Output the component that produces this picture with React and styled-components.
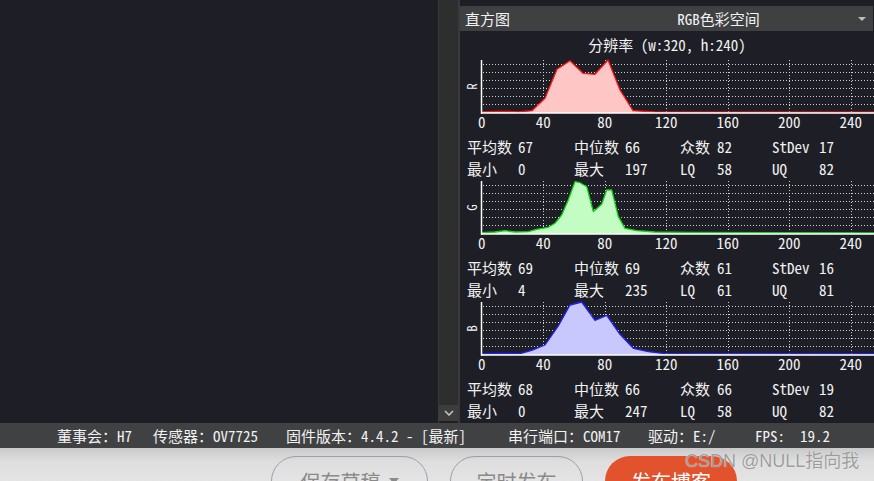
import React from 'react';
import styled, { createGlobalStyle } from 'styled-components';

const GlobalStyle = createGlobalStyle`
  html, body {
    margin: 0;
    padding: 0;
    background: #1e1f26;
  }
  body {
    font-family: "Noto Sans Mono CJK SC", "Liberation Mono", "Noto Sans CJK SC", monospace;
  }
`;

const MONO = '"Noto Sans Mono CJK SC", "Liberation Mono", "Noto Sans CJK SC", monospace';

const Screen = styled.div`
  width: 874px;
  height: 481px;
  overflow: hidden;
  display: flex;
  flex-direction: column;
`;

const Workspace = styled.div`
  flex: none;
  display: flex;
  height: 423px;
  background: #1e1f26;
`;

const Viewer = styled.div`
  width: 438px;
  background: #1e1f26;
`;

const ScrollTrack = styled.div`
  width: 19px;
  background: #2e2e2e;
  border-left: 1px solid #3a3a3a;
  border-right: 2px solid #393a3d;
  display: flex;
  flex-direction: column;
  justify-content: flex-end;
  box-shadow: inset 0 -2px 0 #202024;
  padding-bottom: 2px;
`;

const ScrollButton = styled.div`
  height: 16px;
  background: #3d3d3d;
  display: flex;
  align-items: center;
  justify-content: center;
`;

const Panel = styled.div`
  flex: 1;
  display: flex;
  flex-direction: column;
  padding-top: 6px;
  background: #1e1f26;
  color: #f2f2f2;
`;

const PanelHeader = styled.div`
  flex: none;
  height: 25px;
  background: #3f4042;
  display: flex;
  align-items: center;
  font-size: 15px;
  margin-right: 1px;
`;

const HeaderTitle = styled.div`
  width: 100px;
  padding-left: 5px;
`;

const Combo = styled.div`
  flex: 1;
  display: flex;
  align-items: center;
`;

const ComboText = styled.div`
  flex: 1;
  text-align: center;
  padding-left: 22px;
`;

const ComboArrow = styled.div`
  width: 0;
  height: 0;
  border-left: 4px solid transparent;
  border-right: 4px solid transparent;
  border-top: 4px solid #bdbdbd;
  margin-right: 7px;
  margin-left: 8px;
`;

const Resolution = styled.div`
  flex: none;
  height: 27px;
  display: flex;
  align-items: center;
  justify-content: center;
  font-size: 15px;
  white-space: pre;
`;

const Section = styled.div`
  flex: none;
  display: flex;
  flex-direction: column;
`;

const Chart = styled.svg`
  display: block;
  width: 414px;
  height: 74px;
`;

const StatsGrid = styled.div`
  display: grid;
  grid-template-columns: 51px 56px 51px 55px 37px 55px 47px 1fr;
  grid-auto-rows: 22px;
  align-items: center;
  padding-left: 7px;
  margin-top: 3px;
  font-size: 15px;
  white-space: pre;
`;

const StatusBar = styled.div`
  flex: none;
  height: 25px;
  background: #404143;
  display: flex;
  align-items: center;
  padding-left: 57px;
  color: #f2f2f2;
  font-size: 15px;
  white-space: pre;
`;

const StatusItem = styled.div`
  width: ${(p) => (p.$width ? `${p.$width}px` : 'auto')};
  flex: none;
`;

const Footer = styled.div`
  flex: 1;
  min-height: 0;
  overflow: hidden;
  position: relative;
  background: linear-gradient(#c9c9c9, #dedede 40%, #e4e4e4);
  display: flex;
  align-items: flex-start;
  gap: 22px;
  padding: 8px 0 0 271px;
`;

const PillButton = styled.div`
  flex: none;
  width: ${(p) => p.$width}px;
  height: 50px;
  box-sizing: border-box;
  border-radius: 25px;
  display: flex;
  align-items: center;
  justify-content: center;
  gap: 8px;
  font-family: "Noto Sans CJK SC", sans-serif;
  font-size: 20px;
  color: ${(p) => (p.$primary ? '#ffffff' : '#8a8a8a')};
  background: ${(p) => (p.$primary ? '#e2522c' : 'transparent')};
  border: ${(p) => (p.$primary ? 'none' : '1px solid #9e9eac')};
`;

const Watermark = styled.div`
  position: absolute;
  left: 685px;
  top: 4px;
  font-family: "Liberation Sans", "Noto Sans CJK SC", sans-serif;
  font-size: 18px;
  line-height: 19px;
  color: #9c9c9c;
  text-shadow: 0 0 1px #ffffff;
  white-space: pre;
`;

const AXIS_X = 21.7;
const UNIT = 1.5375;
const BASE = 55;

const channels = [
  {
    key: 'R',
    fill: '#ffc6c6',
    stroke: '#ff1414',
    points: [[21.7, 54], [38, 53.3], [48, 53.3], [58, 54], [72, 52.7], [85, 40.3], [97, 11.3], [110, 2.7], [123, 15.3], [135, 16.3], [148, 2], [160, 32], [173, 52.7], [195, 54], [414, 54.2]],
    stats: [['平均数', '67'], ['中位数', '66'], ['众数', '82'], ['StDev', '17'], ['最小', '0'], ['最大', '197'], ['LQ', '58'], ['UQ', '82']],
  },
  {
    key: 'G',
    fill: '#c4fdc4',
    stroke: '#14d414',
    points: [[21.7, 53.7], [35, 53], [45, 51.7], [55, 53], [68.3, 52.7], [76.7, 50.3], [88.3, 48.3], [95, 44.3], [101.7, 36], [108.3, 21], [115, 2.7], [120, 3.7], [126.7, 7.7], [133.3, 32.7], [141.7, 25.3], [146.7, 11], [151.7, 11], [158.3, 37.7], [165, 49.3], [176.7, 51.7], [195, 53], [228, 53.3], [414, 53.9]],
    stats: [['平均数', '69'], ['中位数', '69'], ['众数', '61'], ['StDev', '16'], ['最小', '4'], ['最大', '235'], ['LQ', '61'], ['UQ', '81']],
  },
  {
    key: 'B',
    fill: '#c8c8ff',
    stroke: '#1e1eff',
    points: [[21.7, 53.7], [38.3, 53.3], [60, 53.7], [71.7, 50.3], [85, 45], [98.3, 26], [110, 5], [121.7, 2], [135, 20.3], [146.7, 15.3], [160, 34.3], [173.3, 48.3], [188.3, 51.7], [205, 53.7], [414, 54]],
    stats: [['平均数', '68'], ['中位数', '66'], ['众数', '66'], ['StDev', '19'], ['最小', '0'], ['最大', '247'], ['LQ', '58'], ['UQ', '82']],
  },
];

const ticks = [0, 40, 80, 120, 160, 200, 240];
const gridRows = [6.5, 14.5, 22.5, 30.5, 38.5, 46.5];

function Histogram({ channel }) {
  const line = channel.points.map(([x, y], i) => `${i ? 'L' : 'M'}${x},${y}`).join(' ');
  const area = `M${AXIS_X},${BASE} ${line.replace('M', 'L')} L414,${BASE} Z`;

  return (
    <Chart viewBox="0 0 414 74">
      {gridRows.map((y) => (
        <line key={y} x1={23} x2={414} y1={y} y2={y} stroke="#cfcfcf" strokeWidth="1" strokeDasharray="1 2" />
      ))}
      {ticks.slice(1).map((t) => {
        const x = Math.round(AXIS_X + t * UNIT) + 0.5;
        return <line key={t} x1={x} x2={x} y1={2} y2={BASE} stroke="#cfcfcf" strokeWidth="1" strokeDasharray="1 2" />;
      })}
      <path d={area} fill={channel.fill} />
      <path d={line} fill="none" stroke={channel.stroke} strokeWidth="1.3" strokeLinejoin="round" />
      <line x1={21.5} x2={21.5} y1={2} y2={BASE + 0.75} stroke="#ffffff" strokeWidth="1.5" />
      <line x1={21} x2={414} y1={BASE} y2={BASE} stroke="#ffffff" strokeWidth="1.5" />
      <text
        x={11}
        y={28.5}
        transform="rotate(-90 11 28.5)"
        textAnchor="middle"
        dominantBaseline="central"
        fontFamily={MONO}
        fontSize="13"
        fill="#f2f2f2"
      >
        {channel.key}
      </text>
      {ticks.map((t) => (
        <text key={t} x={AXIS_X + t * UNIT} y={70.3} textAnchor="middle" fontFamily={MONO} fontSize="15" fill="#f2f2f2">
          {t}
        </text>
      ))}
    </Chart>
  );
}

function ChannelSection({ channel }) {
  return (
    <Section>
      <Histogram channel={channel} />
      <StatsGrid>
        {channel.stats.map(([label, value]) => (
          <React.Fragment key={label}>
            <span>{label}</span>
            <span>{value}</span>
          </React.Fragment>
        ))}
      </StatsGrid>
    </Section>
  );
}

const statusItems = [
  ['董事会：H7', 96],
  ['传感器：OV7725', 133],
  ['固件版本：4.4.2 - [最新]', 222],
  ['串行端口：COM17', 140],
  ['驱动：E:/', 107],
  ['FPS:  19.2', 0],
];

export default function App() {
  return (
    <Screen>
      <GlobalStyle />
      <Workspace>
        <Viewer />
        <ScrollTrack>
          <ScrollButton>
            <svg width="10" height="6" viewBox="0 0 10 6">
              <path d="M1 1 L5 5 L9 1" fill="none" stroke="#c8c8c8" strokeWidth="1.5" />
            </svg>
          </ScrollButton>
        </ScrollTrack>
        <Panel>
          <PanelHeader>
            <HeaderTitle>直方图</HeaderTitle>
            <Combo>
              <ComboText>RGB色彩空间</ComboText>
              <ComboArrow />
            </Combo>
          </PanelHeader>
          <Resolution>分辨率 (w:320, h:240)</Resolution>
          {channels.map((c) => (
            <ChannelSection key={c.key} channel={c} />
          ))}
        </Panel>
      </Workspace>
      <StatusBar>
        {statusItems.map(([text, width]) => (
          <StatusItem key={text} $width={width}>
            {text}
          </StatusItem>
        ))}
      </StatusBar>
      <Footer>
        <PillButton $width={157}>
          保存草稿
          <svg width="10" height="6" viewBox="0 0 10 6">
            <path d="M0 0 L10 0 L5 6 Z" fill="#8a8a8a" />
          </svg>
        </PillButton>
        <PillButton $width={133}>定时发布</PillButton>
        <PillButton $width={132} $primary>
          发布博客
        </PillButton>
        <Watermark>CSDN @NULL指向我</Watermark>
      </Footer>
    </Screen>
  );
}
